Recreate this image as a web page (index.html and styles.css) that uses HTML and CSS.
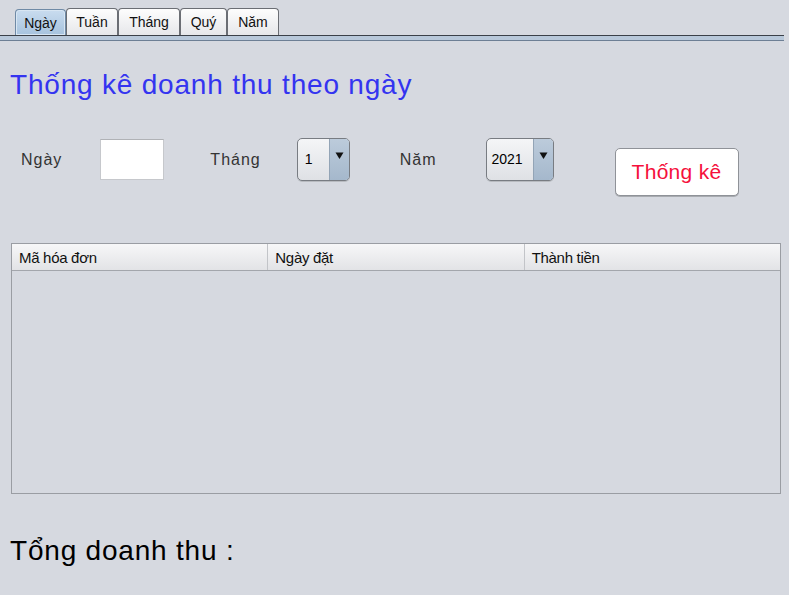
FILE: index.html
```html
<!DOCTYPE html>
<html>
<head>
<meta charset="utf-8">
<link rel="stylesheet" href="styles.css">
</head>
<body>
<div class="app">
  <div class="tabbar">
    <div class="tabs">
      <div class="tab active">Ngày</div>
      <div class="tab">Tuần</div>
      <div class="tab">Tháng</div>
      <div class="tab">Quý</div>
      <div class="tab">Năm</div>
    </div>
    <div class="tabline"></div>
  </div>
  <h1 class="title">Thống kê doanh thu theo ngày</h1>
  <div class="filters">
    <span class="lbl lbl-ngay">Ngày</span>
    <div class="textfield"></div>
    <span class="lbl lbl-thang">Tháng</span>
    <div class="combo combo-month"><span class="cval">1</span><span class="carrow"><svg width="9" height="9" viewBox="0 0 9 9"><path d="M0.5 1.5 H8.5 L4.5 8 Z" fill="#111"/></svg></span></div>
    <span class="lbl lbl-nam">Năm</span>
    <div class="combo combo-year"><span class="cval">2021</span><span class="carrow"><svg width="9" height="9" viewBox="0 0 9 9"><path d="M0.5 1.5 H8.5 L4.5 8 Z" fill="#111"/></svg></span></div>
    <div class="btn">Thống kê</div>
  </div>
  <div class="table">
    <div class="thead">
      <div class="th">Mã hóa đơn</div>
      <div class="th">Ngày đặt</div>
      <div class="th">Thành tiền</div>
    </div>
    <div class="tbody"></div>
  </div>
  <div class="total">Tổng doanh thu :</div>
</div>
</body>
</html>
```
FILE: styles.css
```css
html, body {
  margin: 0;
  padding: 0;
  background: #d6d9e0;
}
body {
  width: 789px;
  height: 595px;
  overflow: hidden;
  font-family: "Liberation Sans", Arial, sans-serif;
}
.app {
  display: flex;
  flex-direction: column;
}
.tabbar {
  padding-top: 8px;
}
.tabs {
  display: flex;
  padding-left: 15px;
  height: 27px;
  align-items: flex-end;
}
.tab {
  box-sizing: border-box;
  height: 27px;
  border: 1px solid #6b6e74;
  border-bottom: none;
  border-radius: 4px 4px 0 0;
  background: linear-gradient(#fdfdfd, #e6e7ea);
  font-size: 14px;
  line-height: 27px;
  text-align: center;
  color: #111;
}
.tab:nth-child(1) { width: 51px; }
.tab:nth-child(2) { width: 52px; }
.tab:nth-child(3) { width: 62px; }
.tab:nth-child(4) { width: 47px; }
.tab:nth-child(5) { width: 52px; }
.tab.active {
  height: 26px;
  line-height: 26px;
  background: linear-gradient(#c9dcef, #a7c3de);
  border-color: #6f8aa6;
  box-shadow: inset 0 0 0 1px #d8e6f3;
}
.tabline {
  margin-right: 5px;
  border-top: 1px solid #3b4048;
  border-bottom: 1px solid #6d7f95;
  background: #b8c8da;
  box-sizing: border-box;
  height: 6px;
}
.title {
  margin: 28px 0 0 10px;
  font-weight: normal;
  font-size: 28px;
  letter-spacing: 0.8px;
  line-height: 32px;
  color: #3434f0;
}
.filters {
  display: flex;
  align-items: flex-start;
  margin-top: 37px;
  height: 60px;
}
.lbl {
  font-size: 16px;
  letter-spacing: 1px;
  line-height: 18px;
  margin-top: 13px;
  color: #333;
}
.lbl-ngay { margin-left: 21px; }
.textfield {
  box-sizing: border-box;
  width: 64px;
  height: 41px;
  margin-left: 38px;
  margin-top: 1px;
  background: #fff;
  border: 1px solid #c6c8cc;
  border-top-color: #b0b2b6;
}
.lbl-thang { margin-left: 46px; }
.combo {
  box-sizing: border-box;
  height: 43px;
  display: flex;
  border: 1px solid #787c82;
  border-radius: 5px;
  background: linear-gradient(#f4f5f7, #dfe1e5);
  overflow: hidden;
  box-shadow: 0 1px 0 #b8bbc0;
}
.combo-month { width: 53px; margin-left: 36px; }
.combo-year { width: 68px; margin-left: 49px; }
.cval {
  flex: 1;
  font-size: 14px;
  color: #000;
  line-height: 41px;
  padding-left: 7px;
}
.combo-year .cval { padding-left: 5px; }
.carrow {
  width: 20px;
  border-left: 1px solid #93a4b6;
  background: linear-gradient(#bccbdb, #a5b8cc);
  display: flex;
  justify-content: center;
  padding-top: 12px;
  box-sizing: border-box;
}
.lbl-nam { margin-left: 50px; }
.btn {
  box-sizing: border-box;
  width: 124px;
  height: 48px;
  margin-left: 61px;
  margin-top: 10px;
  border: 1px solid #8f9298;
  border-radius: 5px;
  background: #fff;
  box-shadow: 0 1px 0 #a8abb0;
  color: #f5103c;
  font-size: 21px;
  letter-spacing: 0.3px;
  line-height: 46px;
  text-align: center;
}
.table {
  box-sizing: border-box;
  margin: 45px 0 0 11px;
  width: 770px;
  height: 251px;
  border: 1px solid #9a9da3;
  display: flex;
  flex-direction: column;
}
.thead {
  display: flex;
  height: 27px;
  box-sizing: border-box;
  border-bottom: 1px solid #a3a6ac;
  background: linear-gradient(#f7f7f8, #e2e3e6);
}
.th {
  flex: 1;
  box-sizing: border-box;
  padding-left: 7px;
  font-size: 15px;
  line-height: 27px;
  color: #111;
  letter-spacing: -0.3px;
  border-right: 1px solid #c2c4c8;
}
.th:last-child { border-right: none; }
.tbody { flex: 1; }
.total {
  margin: 40px 0 0 10px;
  font-size: 28px;
  letter-spacing: 0.8px;
  line-height: 34px;
  color: #000;
}
```
